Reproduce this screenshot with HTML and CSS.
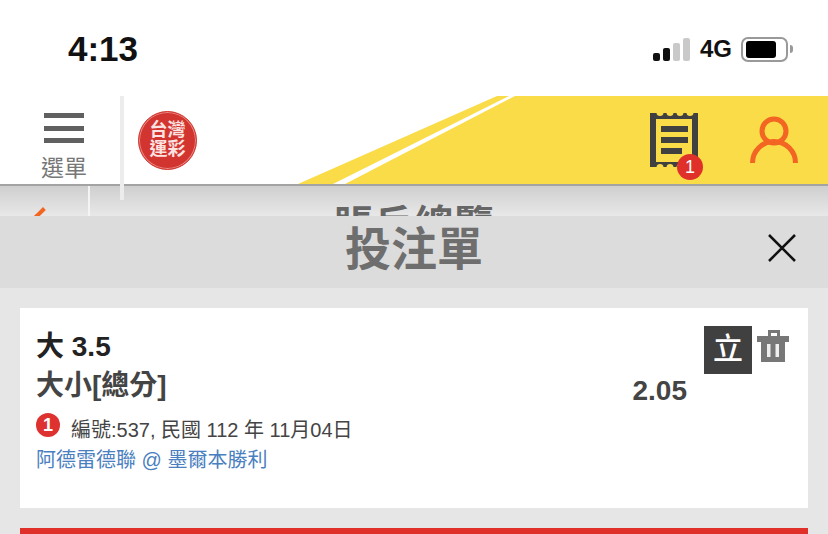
FILE: index.html
```html
<!DOCTYPE html>
<html lang="zh-Hant">
<head>
    <meta charset="UTF-8">
    <meta name="viewport" content="width=device-width, initial-scale=1.0">
    <title>投注單</title>
    <link rel="stylesheet" href="styles.css">
</head>
<body>
    <div class="status-bar">
        <div class="time">4:13</div>
        <div class="status-right">
            <div class="signal">
                <span class="bar bar-1"></span>
                <span class="bar bar-2"></span>
                <span class="bar bar-3"></span>
                <span class="bar bar-4"></span>
            </div>
            <div class="network">4G</div>
            <div class="battery"><span class="battery-level"></span></div>
            <span class="battery-tip"></span>
        </div>
    </div>

    <div class="header">
        <svg class="header-bg" width="828" height="88" viewBox="0 0 828 88">
            <polygon points="298,88 497,0 828,0 828,88" fill="#f9dc47"/>
            <polygon points="333,88 345,88 515,0 509,0" fill="#ffffff"/>
        </svg>
        <div class="menu">
            <div class="menu-icon"><span></span><span></span><span></span></div>
            <div class="menu-label">選單</div>
        </div>
        <div class="divider"></div>
        <div class="logo"><span>台灣</span><span>運彩</span></div>
        <div class="header-icons">
            <div class="receipt">
                <svg width="48" height="54" viewBox="0 0 48 54">
                    <rect width="48" height="54" fill="#404040"/>
                    <g fill="#f9dc47">
                        <circle cx="10" cy="-0.500" r="3.500"/>
                        <circle cx="20" cy="-0.500" r="3.500"/>
                        <circle cx="30" cy="-0.500" r="3.500"/>
                        <circle cx="40" cy="-0.500" r="3.500"/>
                        <circle cx="10" cy="54.500" r="3.500"/>
                        <circle cx="20" cy="54.500" r="3.500"/>
                        <circle cx="30" cy="54.500" r="3.500"/>
                        <circle cx="40" cy="54.500" r="3.500"/>
                        <rect x="6" y="6" width="36" height="43"/>
                    </g>
                    <rect x="11" y="13" width="27" height="6" fill="#404040"/>
                    <rect x="11" y="24" width="27" height="6" fill="#404040"/>
                    <rect x="11" y="35" width="21" height="6" fill="#404040"/>
                </svg>
                <span class="receipt-badge">1</span>
            </div>
            <svg class="user-icon" width="48" height="48" viewBox="0 0 48 48">
                <circle cx="24" cy="15" r="12" fill="none" stroke="#f26522" stroke-width="5"/>
                <path d="M2.500 47a21.500 21.500 0 0 1 43 0" fill="none" stroke="#f26522" stroke-width="5"/>
            </svg>
        </div>
    </div>

    <div class="sub-nav">
        <div class="back-arrow"></div>
        <div class="sub-line"></div>
        <div class="sub-title">賬戶總覽</div>
    </div>

    <div class="sheet-title">
        <span>投注單</span>
        <svg class="close" width="28" height="28" viewBox="0 0 28 28">
            <path d="M1 1l26 26M27 1L1 27" stroke="#111" stroke-width="2.500" fill="none"/>
        </svg>
    </div>

    <div class="sheet-body">
        <div class="bet-card">
            <div class="bet-info">
                <div class="bet-pick">大 3.5</div>
                <div class="bet-market">大小[總分]</div>
                <div class="bet-meta">
                    <span class="num-badge">1</span>
                    <span>編號:537, 民國 112 年 11月04日</span>
                </div>
                <div class="bet-match">阿德雷德聯 @ 墨爾本勝利</div>
            </div>
            <div class="bet-odds">2.05</div>
            <div class="bet-actions">
                <div class="single-btn">立</div>
                <svg width="32" height="32" viewBox="0 0 32 32">
                    <path d="M11 6V0h12v6h9v6h-4v20H4V12H0V6zM14 3v3h6V3z" fill="#777" fill-rule="evenodd"/>
                    <rect x="10" y="14" width="3.500" height="13" fill="#eee"/>
                    <rect x="18.500" y="14" width="3.500" height="13" fill="#eee"/>
                </svg>
            </div>
        </div>
        <div class="submit-bar"></div>
    </div>
</body>
</html>
```

FILE: styles.css
```css
* {
    margin: 0;
    padding: 0;
    box-sizing: border-box;
}

body {
    width: 828px;
    height: 534px;
    overflow: hidden;
    position: relative;
    background: #e6e6e6;
    font-family: "Liberation Sans", "Noto Sans CJK TC", sans-serif;
}

/* status bar */
.status-bar {
    height: 96px;
    background: #fff;
    display: flex;
    justify-content: space-between;
    align-items: center;
    padding: 2px 35px 0 68px;
}

.time {
    font-size: 35px;
    font-weight: bold;
    color: #111;
}

.status-right {
    display: flex;
    align-items: center;
}

.signal {
    display: flex;
    align-items: flex-end;
    gap: 3px;
    height: 23px;
    margin-right: 10px;
}

.bar {
    width: 7px;
    border-radius: 2px;
    background: #c9c9c9;
}

.bar-1 {
    height: 8px;
    background: #111;
}

.bar-2 {
    height: 13px;
    background: #111;
}

.bar-3 {
    height: 18px;
}

.bar-4 {
    height: 23px;
}

.network {
    font-size: 24px;
    font-weight: bold;
    color: #111;
    margin-right: 9px;
}

.battery {
    width: 47px;
    height: 25px;
    border: 2px solid #999;
    border-radius: 7px;
    padding: 2px 3px;
}

.battery-level {
    display: block;
    width: 30px;
    height: 100%;
    background: #000;
    border-radius: 3px;
}

.battery-tip {
    width: 3px;
    height: 8px;
    margin-left: 2px;
    background: #999;
    border-radius: 0 3px 3px 0;
}

/* header */
.header {
    height: 90px;
    background: #fff;
    border-bottom: 2px solid #a3a3a3;
    position: relative;
    display: flex;
    align-items: center;
}

.header-bg {
    position: absolute;
    left: 0;
    top: 0;
}

.menu {
    width: 128px;
    margin-right: -8px;
    align-self: flex-start;
    position: relative;
    display: flex;
    flex-direction: column;
    align-items: center;
    padding-top: 17px;
}

.menu-icon {
    width: 40px;
    display: flex;
    flex-direction: column;
    gap: 7.500px;
    margin-bottom: 9px;
}

.menu-icon span {
    height: 5px;
    background: #606060;
}

.menu-label {
    font-size: 23px;
    line-height: 32px;
    color: #777;
}

.divider {
    position: absolute;
    left: 120px;
    top: 0;
    width: 4px;
    height: 104px;
    background: #ececec;
    z-index: 2;
}

.logo {
    position: relative;
    width: 59px;
    height: 59px;
    margin-left: 18px;
    border-radius: 50%;
    background: #d2352f;
    border: 1px solid #d2352f;
    box-shadow: inset 0 0 0 1px #e98a85;
    display: flex;
    flex-direction: column;
    align-items: center;
    justify-content: center;
    color: #fbe3e1;
    font-size: 18px;
    font-weight: bold;
    line-height: 19px;
}

.header-icons {
    position: relative;
    margin-left: auto;
    margin-right: 30px;
    display: flex;
    align-items: center;
    gap: 52px;
}

.receipt {
    position: relative;
    width: 48px;
    height: 54px;
}

.receipt svg {
    display: block;
    overflow: hidden;
}

.receipt-badge {
    position: absolute;
    left: 27px;
    top: 41px;
    width: 26px;
    height: 26px;
    border-radius: 50%;
    background: #e0302a;
    color: #fff;
    font-size: 18px;
    line-height: 26px;
    text-align: center;
}

/* page behind the sheet */
.sub-nav {
    height: 30px;
    overflow: hidden;
    position: relative;
    background: linear-gradient(#cfcfcf, #e8e8e8);
    display: flex;
    justify-content: center;
}

.back-arrow {
    position: absolute;
    left: 36px;
    top: 24px;
    width: 14px;
    height: 14px;
    border-left: 4px solid #f26522;
    border-top: 4px solid #f26522;
    transform: rotate(-45deg);
}

.sub-line {
    position: absolute;
    left: 88px;
    top: 0;
    width: 2px;
    height: 30px;
    background: #f4f4f4;
}

.sub-title {
    font-size: 40px;
    font-weight: bold;
    line-height: 48px;
    padding-top: 15px;
    color: #666;
}

/* bet slip */
.sheet-title {
    height: 72px;
    background: #dcdcdc;
    position: relative;
    display: flex;
    align-items: center;
    justify-content: center;
    padding-bottom: 14px;
    font-size: 46px;
    font-weight: bold;
    color: #6e6e6e;
}

.close {
    position: absolute;
    right: 32px;
    top: 18px;
}

.sheet-body {
    padding: 20px 20px 0;
}

.bet-card {
    height: 200px;
    background: #fff;
    display: flex;
    align-items: flex-start;
    padding: 18px 19px 18px 16px;
}

.bet-info {
    flex: 1;
    padding-top: 1px;
}

.bet-pick {
    font-size: 28px;
    font-weight: bold;
    line-height: 40px;
    color: #222;
}

.bet-market {
    font-size: 28px;
    font-weight: bold;
    line-height: 38px;
    color: #444;
}

.bet-meta {
    display: flex;
    align-items: center;
    gap: 11px;
    margin-top: 10px;
    font-size: 20px;
    line-height: 30px;
    color: #444;
}

.num-badge {
    width: 24px;
    height: 24px;
    margin-top: -10px;
    border-radius: 50%;
    background: #dd3230;
    color: #fff;
    font-size: 18px;
    font-weight: bold;
    line-height: 24px;
    text-align: center;
}

.bet-match {
    font-size: 20px;
    line-height: 30px;
    color: #4a80c0;
}

.bet-odds {
    margin: 49px 17px 0 0;
    font-size: 28px;
    font-weight: bold;
    line-height: 32px;
    color: #444;
}

.bet-actions {
    display: flex;
    align-items: flex-start;
    gap: 5px;
}

.single-btn {
    width: 48px;
    height: 48px;
    background: #404040;
    color: #fff;
    font-size: 30px;
    line-height: 46px;
    font-weight: 500;
    text-align: center;
}

.bet-actions svg {
    margin-top: 4px;
}

.submit-bar {
    height: 6px;
    margin-top: 20px;
    background: #e0302a;
}
```
